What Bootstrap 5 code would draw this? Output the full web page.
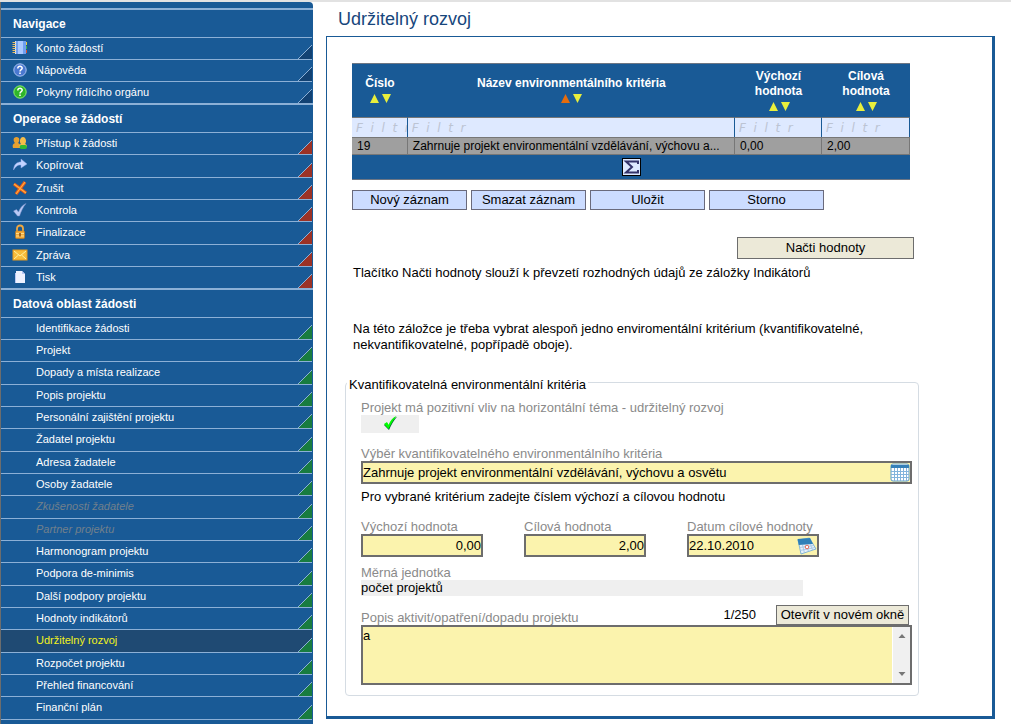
<!DOCTYPE html>
<html lang="cs">
<head>
<meta charset="utf-8">
<meta name="viewport" content="width=device-width, initial-scale=1">
<title>Udržitelný rozvoj</title>
<link href="https://cdn.jsdelivr.net/npm/bootstrap@5.3.0/dist/css/bootstrap.min.css" rel="stylesheet">
<style>
:root{--blue:#195a96;--rule:#8cb0d6}
body{font-family:"Liberation Sans",Arial,sans-serif;font-size:13px;line-height:16px;color:#000;background:#fff}
.page{border-top:2px solid #e2e2e2}
/* sidebar */
.side{width:313px;background:var(--blue);border-left:1px solid #6d6d6d;border-top-right-radius:4px;padding-top:6px}
.side h2{font-size:12px;line-height:16px;font-weight:700;color:#fff;margin:0;padding:6px 12px 5px;border-top:2px solid var(--rule)}
.side ul{margin:0 1px 0 0}
.side li{height:22px;border-top:1px solid var(--rule)}
.side .ops li:nth-child(3n+2),.side .data li:nth-child(3n){height:23px}
.side .data{border-bottom:1px solid var(--rule)}
.side li a,.side li span.off{display:flex;align-items:center;height:100%;padding:0 0 2px 35px;font-size:11px;line-height:16px;color:#fff;text-decoration:none;--corner:#124273;
 background:linear-gradient(135deg,transparent 48%,var(--rule) 48%,var(--rule) 53%,var(--corner) 53%) right bottom/14px 14px no-repeat}
.side .ops a{--corner:#9b3226}
.side .data li a,.side .data li span.off{--corner:#187c40}
.side li span.off{color:#72808c;font-style:italic}
.side li.now{background:#1f4a73}
.side li.now a{color:#f2f21c}
.side svg{width:16px;height:16px;margin-left:-24px;margin-right:8px}
/* content */
.main{padding:0 16px 6px 13px;min-width:0}
.main h1{font-size:18px;line-height:24px;color:#17467c;margin:0;padding:5px 12px}
.panel{border:1px solid var(--blue);border-right-width:3px;border-bottom-width:3px;padding:26px 73px 20px 18px}
.inset{margin:0 9px 0 7px}
.grid{width:100%;table-layout:fixed;border-collapse:separate;border-spacing:0;background:var(--blue);border-top:1px solid #6d7684;border-bottom:1px solid #6d7684}
.grid th{height:53px;padding:0 4px;font-size:12px;line-height:15px;color:#fff;text-align:center;vertical-align:middle}
.grid th svg{display:block;margin:0 auto;width:24px;height:14px}
.grid .flt td{padding:0;height:20px;background:#dee9ff;border-top:1px solid #777;border-right:1px solid var(--blue)}
.grid .flt input{display:block;width:100%;height:18px;border:0;background:none;padding:0 0 0 4px;font:italic 12px/18px "DejaVu Sans",sans-serif}
.grid .flt input::placeholder{color:#bcc4d3;opacity:1}
.grid .rec td{height:18px;padding:0 4px 0 5px;background:#9f9f9f;border:solid #777;border-width:1px 1px 1px 0;font-size:12px;line-height:16px;white-space:nowrap;overflow:hidden}
.grid .sum td{height:24px;text-align:center;padding:0}
.sumbtn{display:inline-block;width:19px;height:18px;padding:0;border:1px solid #000;background:#dee9ff;vertical-align:middle}
.sumbtn svg{display:block}
.cmds{margin-top:10px}
.cmd{flex:0 0 115px;height:20px;padding:0;border:1px solid #6a6a7c;background:#ccdcff;color:#000;font-size:13px;line-height:18px}
.alt{border:1px solid #6d6d6d;background:#ece9d8;color:#000;padding:0;font-size:13px;line-height:18px}
.loadrow{margin:27px 5px 6px 0}
.load{width:177px;height:22px}
.group{border:1px solid #d5dce3;border-radius:4px;margin:19px 0 0;padding:7px 6px 10px 15px}
.group legend{float:none;width:auto;font-size:13px;line-height:16px;margin:0 0 0 -14px;padding:5px 2px 0}
.lab{display:block;color:#8a8a8a;line-height:15px}
.fld{display:flex;align-items:center;border:2px solid #6d6d6d;background:#fbf3ad;height:23px}
.fld input,.fld textarea{border:0;background:none;padding:0;width:100%;min-width:0;color:#000;font-size:13px;line-height:16px;outline:0}
.ro{background:#efefef}
.tick{width:58px;height:18px;margin-bottom:13px}
.hint{margin:5px 0 14px}
.vals{gap:41px}
.val{width:122px}
.val.date{width:132px}
.unit{height:16px;margin:0 109px 9px 0}
.count{margin-right:20px}
.popout{width:133px;margin-right:3px}
.memo{height:60px;align-items:stretch}
.memo textarea{resize:none;height:56px;overflow:hidden;padding:1px 0 0}
.bar{flex:0 0 18px;background:#f0f0f0;border-left:1px solid #fff;padding:5px 0}
</style>
</head>
<body>
<div class="page d-flex min-vh-100">
<nav class="side flex-shrink-0">
 <h2>Navigace</h2>
 <ul class="list-unstyled">
  <li><a href="#"><svg viewBox="0 0 16 16"><path fill="#6f9ff0" d="M3 1h11v13H3z"/><path fill="#a8c8ff" d="M6 1h5v13H6z"/><path fill="#d9e6ff" d="M3 1h1v13H3z"/><path stroke="#f0c060" stroke-dasharray="1 1" stroke-width="3" d="M2 2v12"/><path fill="#e8d040" d="M14 2h1v3h-1z"/><path fill="#3cb450" d="M14 6h1v3h-1z"/><path fill="#e05030" d="M14 10h1v3h-1z"/></svg>Konto žádostí</a></li>
  <li><a href="#"><svg viewBox="0 0 16 16"><circle cx="8" cy="8" r="6.2" fill="#4a78d0" stroke="#a9c3f2"/><path d="M5.8 6.5c0-3 4.6-2.8 4.4-.2C10.1 7.700 8 7.700 8 9.500" fill="none" stroke="#fff" stroke-width="1.500"/><path fill="#fff" d="M7.200 10.500h1.600V12H7.200z"/></svg>Nápověda</a></li>
  <li><a href="#"><svg viewBox="0 0 16 16"><circle cx="8" cy="8" r="6.2" fill="#2fb52a" stroke="#8cf06a"/><path d="M5.8 6.5c0-3 4.6-2.8 4.4-.2C10.1 7.700 8 7.700 8 9.500" fill="none" stroke="#fff" stroke-width="1.500"/><path fill="#fff" d="M7.200 10.500h1.600V12H7.200z"/></svg>Pokyny řídícího orgánu</a></li>
 </ul>
 <h2>Operace se žádostí</h2>
 <ul class="list-unstyled ops">
  <li><a href="#"><svg viewBox="0 0 16 16"><path fill="#e8a030" d="M1 13c-1-3 0-4 2-5-2-2-2-6 1.500-6s3.500 4 1.500 6c2 1 3 2 3 5z"/><path fill="#f6bd4a" d="M7 13c0-3 1-4 2-4-2-2-1-7 2-7s4 5 2 7c1 0 2 1 2 3z"/><rect x="7.500" y="10" width="7.500" height="4" rx="2" fill="#32b932"/></svg>Přístup k žádosti</a></li>
  <li><a href="#"><svg viewBox="0 0 16 16"><path fill="#c3d3ff" stroke="#8fa7e8" stroke-width=".5" d="M1.500 13C2 7 5 5 9 5V2l6 5-6 4V8c-3-.5-5 1-7.500 5z"/></svg>Kopírovat</a></li>
  <li><a href="#"><svg viewBox="0 0 16 16"><path d="M2 4l12 9M13 2L4 14" stroke="#ec5a14" stroke-width="3.200"/><path d="M2 4l12 9M13 2L4 14" stroke="#ffb040" stroke-width="1.200"/></svg>Zrušit</a></li>
  <li><a href="#"><svg viewBox="0 0 16 16"><path fill="#b9c9f6" stroke="#8296cf" stroke-width=".5" d="M1.500 9l3-1.500L6.500 10C8 6 10.500 3 14 1.500 11 5 9 9.500 7.500 14H5.500z"/></svg>Kontrola</a></li>
  <li><a href="#"><svg viewBox="0 0 16 16"><path d="M5 8V4.500c0-4 6-4 6 0V8" fill="none" stroke="#f0a840" stroke-width="1.800"/><rect x="3.500" y="7" width="9" height="7.500" rx="1" fill="#f4ab38" stroke="#c87818" stroke-width=".6"/><path d="M4 9.500h8M4 12h8" stroke="#ffdc8c"/><path d="M8 9v3.500" stroke="#844b10" stroke-width="1.500"/></svg>Finalizace</a></li>
  <li><a href="#"><svg viewBox="0 0 16 16"><rect x="1" y="3" width="14" height="10" fill="#f9bd3a" stroke="#e69a20"/><path d="M2 4l6 5 6-5M2 12l4.500-4M14 12L9.500 8" fill="none" stroke="#fff0a0"/></svg>Zpráva</a></li>
  <li><a href="#"><svg viewBox="0 0 16 16"><path fill="#b9c8f6" d="M3 4h2v10H3z"/><path fill="#eef2ff" d="M4 2h6l3 3v9H4z"/><path fill="#b9c8f6" d="M10 2l3 3h-3z"/></svg>Tisk</a></li>
 </ul>
 <h2>Datová oblast žádosti</h2>
 <ul class="list-unstyled data">
  <li><a href="#">Identifikace žádosti</a></li>
  <li><a href="#">Projekt</a></li>
  <li><a href="#">Dopady a místa realizace</a></li>
  <li><a href="#">Popis projektu</a></li>
  <li><a href="#">Personální zajištění projektu</a></li>
  <li><a href="#">Žadatel projektu</a></li>
  <li><a href="#">Adresa žadatele</a></li>
  <li><a href="#">Osoby žadatele</a></li>
  <li><span class="off">Zkušenosti žadatele</span></li>
  <li><span class="off">Partner projektu</span></li>
  <li><a href="#">Harmonogram projektu</a></li>
  <li><a href="#">Podpora de-minimis</a></li>
  <li><a href="#">Další podpory projektu</a></li>
  <li><a href="#">Hodnoty indikátorů</a></li>
  <li class="now"><a href="#" aria-current="page">Udržitelný rozvoj</a></li>
  <li><a href="#">Rozpočet projektu</a></li>
  <li><a href="#">Přehled financování</a></li>
  <li><a href="#">Finanční plán</a></li>
 </ul>
</nav>
<main class="main flex-grow-1 d-flex flex-column">
 <h1>Udržitelný rozvoj</h1>
 <div class="panel flex-grow-1">
  <div class="inset">
   <table class="grid">
    <colgroup><col style="width:10%"><col><col style="width:87px"><col style="width:88px"></colgroup>
    <thead>
     <tr>
      <th scope="col">Číslo<svg viewBox="0 0 24 14"><path fill="#e8ee3c" d="M6.500 3L11 12H2zM14 3h9l-4.500 9z"/></svg></th>
      <th scope="col">Název environmentálního kritéria<svg viewBox="0 0 24 14"><path fill="#e66c0c" d="M6.500 3L11 12H2z"/><path fill="#e8ee3c" d="M14 3h9l-4.500 9z"/></svg></th>
      <th scope="col">Výchozí hodnota<svg viewBox="0 0 24 14"><path fill="#e8ee3c" d="M6.500 3L11 12H2zM14 3h9l-4.500 9z"/></svg></th>
      <th scope="col">Cílová hodnota<svg viewBox="0 0 24 14"><path fill="#e8ee3c" d="M6.500 3L11 12H2zM14 3h9l-4.500 9z"/></svg></th>
     </tr>
    </thead>
    <tbody>
     <tr class="flt">
      <td><input type="text" placeholder="F&nbsp; i&nbsp; l&nbsp; t&nbsp; r" aria-label="Filtr: Číslo"></td>
      <td><input type="text" placeholder="F&nbsp; i&nbsp; l&nbsp; t&nbsp; r" aria-label="Filtr: Název"></td>
      <td><input type="text" placeholder="F&nbsp; i&nbsp; l&nbsp; t&nbsp; r" aria-label="Filtr: Výchozí hodnota"></td>
      <td><input type="text" placeholder="F&nbsp; i&nbsp; l&nbsp; t&nbsp; r" aria-label="Filtr: Cílová hodnota"></td>
     </tr>
     <tr class="rec"><td>19</td><td>Zahrnuje projekt environmentální vzdělávání, výchovu a...</td><td>0,00</td><td>2,00</td></tr>
    </tbody>
    <tfoot>
     <tr class="sum"><td colspan="4"><button type="button" class="sumbtn" aria-label="Součet"><svg width="17" height="16" viewBox="0 0 17 16"><path fill="none" stroke="#33336a" stroke-width="2" d="M15 5V2.500H3L9 8l-6 5.500h12V11"/></svg></button></td></tr>
    </tfoot>
   </table>
   <div class="cmds d-flex gap-1">
    <button type="button" class="cmd">Nový záznam</button>
    <button type="button" class="cmd">Smazat záznam</button>
    <button type="button" class="cmd">Uložit</button>
    <button type="button" class="cmd">Storno</button>
   </div>
  </div>
  <div class="loadrow d-flex justify-content-end"><button type="button" class="alt load">Načti hodnoty</button></div>
  <p class="ms-2 mb-0">Tlačítko Načti hodnoty slouží k převzetí rozhodných údajů ze záložky Indikátorů</p>
  <p class="ms-2 mt-4 pt-3 mb-0">Na této záložce je třeba vybrat alespoň jedno enviromentální kritérium (kvantifikovatelné, nekvantifikovatelné, popřípadě oboje).</p>
  <fieldset class="group">
   <legend>Kvantifikovatelná environmentální kritéria</legend>
   <span class="lab">Projekt má pozitivní vliv na horizontální téma - udržitelný rozvoj</span>
   <div class="ro tick"><svg class="d-block mx-auto" width="16" height="16" viewBox="0 0 16 16" role="img" aria-label="Ano"><path fill="#063" d="M2 10l3-2 2 2.500C9 6 11 4 15 1.800 12 5 9.500 9.500 7 15z"/><path fill="#0f0" d="M2 9l3-2 1.500 3C8.500 5 11 2.500 14.500 1 11.500 4.500 9 9 6.500 14z"/></svg></div>
   <label class="lab" for="krit">Výběr kvantifikovatelného environmentálního kritéria</label>
   <div class="fld">
    <input id="krit" type="text" value="Zahrnuje projekt environmentální vzdělávání, výchovu a osvětu">
    <svg class="flex-shrink-0" width="20" height="19" viewBox="0 0 20 19"><rect x="1" y="1" width="18" height="17" rx="2" fill="#fff" stroke="#5a9ac8"/><path fill="#3580b8" d="M1 2h18v3H1z"/><path d="M4.500 5v13M7.500 5v13M10.500 5v13M13.500 5v13M16.500 5v13M1 8.500h18M1 11.500h18M1 14.500h18" stroke="#82b4dc"/></svg>
   </div>
   <p class="hint">Pro vybrané kritérium zadejte číslem výchozí a cílovou hodnotu</p>
   <div class="vals d-flex">
    <div class="val"><label class="lab" for="v1">Výchozí hodnota</label><div class="fld"><input id="v1" class="text-end" type="text" value="0,00"></div></div>
    <div class="val"><label class="lab" for="v2">Cílová hodnota</label><div class="fld"><input id="v2" class="text-end" type="text" value="2,00"></div></div>
    <div class="val date"><label class="lab" for="v3">Datum cílové hodnoty</label><div class="fld"><input id="v3" type="text" value="22.10.2010">
     <svg class="flex-shrink-0" width="20" height="18" viewBox="0 0 20 18"><path fill="#e6f1fb" stroke="#68a6d4" stroke-width=".8" d="M1 3l11.500-2L19 12 4 17z"/><path fill="#2f80b8" d="M.5 2L13 1l3 6L1.800 8z"/><path d="M2.500 10.500L17 8.500M3 13.500L18 10.500M5.500 8l2 8M9.500 7.500l2 7M13.500 7.500l2 5.500" stroke="#9cc2e2" stroke-width=".8"/><circle cx="10" cy="10" r="1.800" fill="#fff" stroke="#e06a5a"/></svg></div></div>
   </div>
   <span class="lab mt-2">Měrná jednotka</span>
   <div class="ro unit">počet projektů</div>
   <div class="d-flex align-items-end">
    <label class="lab me-auto" for="popis">Popis aktivit/opatření/dopadu projektu</label>
    <span class="count align-self-center">1/250</span>
    <button type="button" class="alt popout">Otevřít v novém okně</button>
   </div>
   <div class="fld memo">
    <textarea id="popis">a</textarea>
    <div class="bar d-flex flex-column justify-content-between align-items-center"><svg width="8" height="8" viewBox="0 0 8 8"><path fill="#777" d="M4 2l3.500 4h-7z"/></svg><svg width="8" height="8" viewBox="0 0 8 8"><path fill="#777" d="M4 6L.5 2h7z"/></svg></div>
   </div>
  </fieldset>
 </div>
</main>
</div>
<script src="https://cdn.jsdelivr.net/npm/bootstrap@5.3.0/dist/js/bootstrap.bundle.min.js"></script>
</body>
</html>
